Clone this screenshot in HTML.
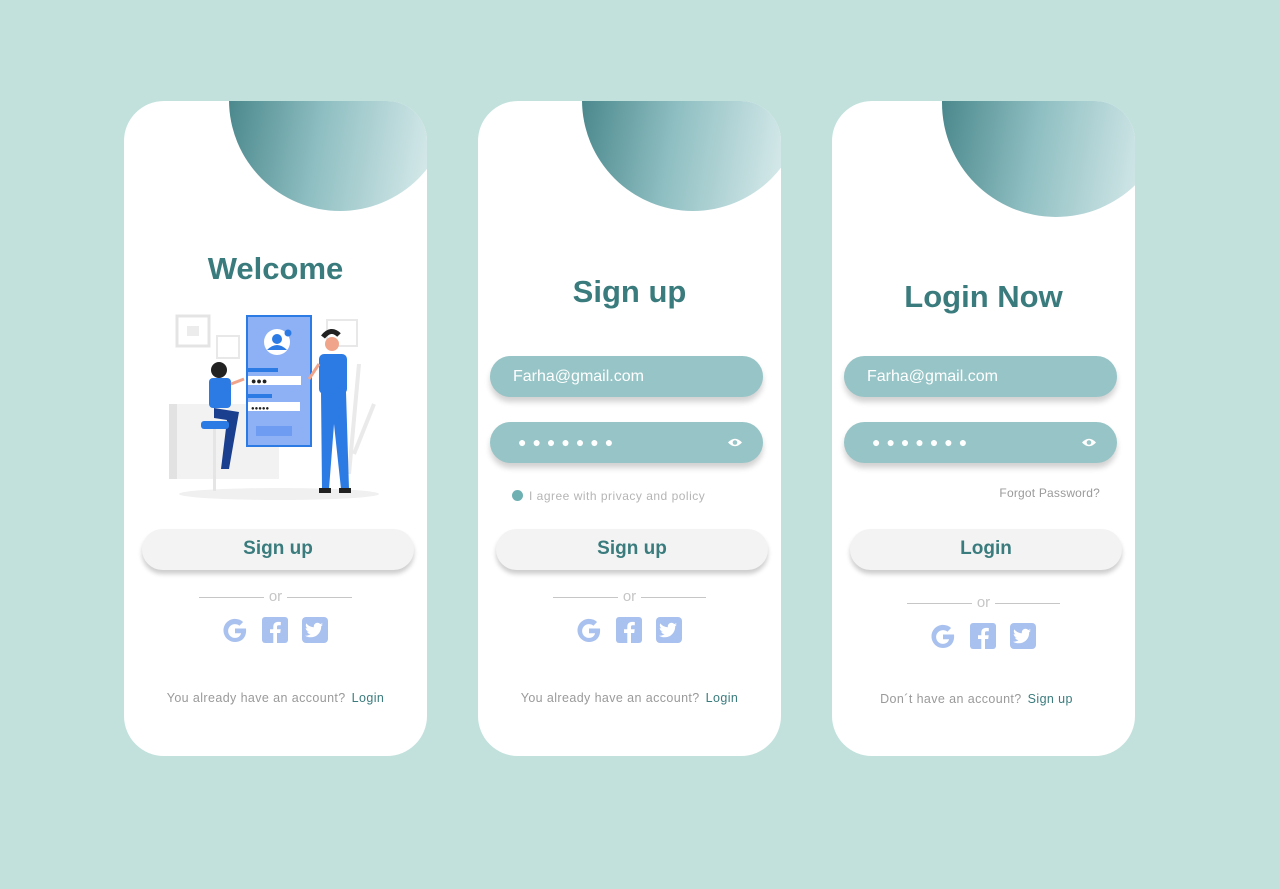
<!DOCTYPE html>
<html><head><meta charset="utf-8"><style>
*{margin:0;padding:0;box-sizing:border-box}
body{width:1280px;height:889px;background:#c2e1dc;font-family:"Liberation Sans",sans-serif;position:relative;overflow:hidden}
.card{position:absolute;top:101px;width:303px;height:655px;background:#fff;border-radius:40px;overflow:hidden}
.blob{position:absolute;border-radius:50%;background:linear-gradient(100deg,#3d7d82 0%,#8fbfc2 45%,#e6f3f3 100%)}
.title{position:absolute;left:0;width:100%;text-align:center;color:#3a7b7d;font-weight:bold;font-size:31px}
.inp{position:absolute;left:12px;width:273px;height:41px;border-radius:21px;background:#97c4c6;box-shadow:0 5px 6px rgba(0,0,0,.18);color:#fff;font-size:16px;line-height:41px;padding-left:23px}
.dots{letter-spacing:6px;font-size:14px;padding-left:28px}
.eye{position:absolute;right:20px;top:15px}
.btn{position:absolute;left:18px;width:272px;height:41px;border-radius:21px;background:#f3f3f3;box-shadow:0 4px 5px rgba(0,0,0,.2);color:#3a7b7d;font-weight:bold;font-size:19px;text-align:center;line-height:39px}
.or{position:absolute;left:0;width:100%;text-align:center;color:#c6c6c6;font-size:15px}
.or span{display:inline-block;width:65px;height:1px;background:#c6c6c6;vertical-align:middle;margin:0 5px}
.icons{position:absolute;left:0;width:100%;display:flex;justify-content:center}
.foot{position:absolute;left:0;width:100%;text-align:center;font-size:12.5px;letter-spacing:.4px;color:#9a9a9a}
.foot b{font-weight:normal;color:#3a7b7d;margin-left:6px}
.small{position:absolute;font-size:12px;letter-spacing:.5px;color:#b5b5b5}
</style></head><body>

<svg width="0" height="0" style="position:absolute">
<defs>
<g id="soc">
<path d="M25 12.5h-11v4.8h6.1c-.7 2.9-3 4.6-6.1 4.6-3.8 0-6.9-3.1-6.9-6.9s3.1-6.9 6.9-6.9c1.7 0 3.2.6 4.4 1.6l3.7-3.7C19.9 4 17.1 2.9 14 2.9 7.6 2.9 2.5 8 2.5 14.4S7.6 26 14 26c6.7 0 11.1-4.6 11.1-11.2 0-.8 0-1.6-.1-2.3z" fill="#a9c1ee"/>
<rect x="41" y="1" width="26" height="26" rx="3" fill="#a9c1ee"/>
<path d="M56 27v-10h3.2l.5-3.7H56v-2.3c0-1 .3-1.8 1.8-1.8h2V6c-.4 0-1.5-.1-2.8-.1-2.8 0-4.7 1.7-4.7 4.8v2.6H49V17h3.3v10z" fill="#fff"/>
<rect x="81" y="1" width="26" height="26" rx="4" fill="#a9c1ee"/>
<path d="M102 8.5c-.7.3-1.4.5-2.1.6.8-.5 1.3-1.2 1.6-2-.7.4-1.5.7-2.3.9-.7-.7-1.6-1.2-2.7-1.2-2 0-3.7 1.7-3.700 3.7 0 .3 0 .6.1.8-3.1-.2-5.8-1.6-7.6-3.9-.3.5-.5 1.2-.5 1.9 0 1.3.7 2.4 1.6 3.1-.6 0-1.2-.2-1.7-.5 0 1.8 1.3 3.3 3 3.600-.3.1-.6.1-1 .1-.2 0-.5 0-.7-.1.5 1.5 1.8 2.5 3.5 2.6-1.3 1-2.9 1.6-4.6 1.6h-.9c1.6 1 3.6 1.6 5.7 1.6 6.8 0 10.5-5.600 10.5-10.5v-.5c.7-.5 1.3-1.2 1.8-1.9z" fill="#fff"/>
</g>
</defs></svg>

<!-- Card 1 -->
<div class="card" style="left:124px">
  <div class="blob" style="left:105px;top:-112px;width:222px;height:222px"></div>
  <div class="title" style="top:150px">Welcome</div>
  <svg style="position:absolute;left:45px;top:203px" width="215" height="200" viewBox="0 0 215 200">
    <rect x="8" y="12" width="32" height="30" fill="none" stroke="#e4e4e4" stroke-width="3"/>
    <rect x="18" y="22" width="12" height="10" fill="#ececec"/>
    <rect x="48" y="32" width="22" height="22" fill="none" stroke="#e8e8e8" stroke-width="2"/>
    <rect x="158" y="16" width="30" height="26" fill="none" stroke="#e8e8e8" stroke-width="2"/>
    <rect x="0" y="100" width="110" height="75" fill="#f2f2f2"/>
    <rect x="0" y="100" width="8" height="75" fill="#e2e2e2"/>
    <path d="M180 170 L190 60 M185 150 L205 100 M175 140 L165 80" stroke="#eaeaea" stroke-width="4"/>
    <ellipse cx="110" cy="190" rx="100" ry="6" fill="#f0f0f0"/>
    <rect x="78" y="12" width="64" height="130" fill="#8eb1f5" stroke="#2c7be5" stroke-width="2"/>
    <circle cx="108" cy="38" r="13" fill="#fff"/>
    <circle cx="108" cy="35" r="5" fill="#2c7be5"/>
    <path d="M98 46 q10-10 20 0" fill="#2c7be5"/>
    <circle cx="119" cy="29" r="3.5" fill="#2c7be5"/>
    <rect x="79" y="64" width="30" height="4" fill="#2c7be5"/>
    <rect x="79" y="72" width="53" height="9" fill="#fff"/>
    <text x="82" y="80" font-size="9" fill="#222" font-family="Liberation Sans">●●●</text>
    <rect x="79" y="90" width="24" height="4" fill="#2c7be5"/>
    <rect x="79" y="98" width="52" height="9" fill="#fff"/>
    <text x="82" y="106" font-size="6" fill="#222" font-family="Liberation Sans">●●●●●</text>
    <rect x="87" y="122" width="36" height="10" fill="#6d9cf2"/>
    <circle cx="50" cy="66" r="8" fill="#222"/>
    <rect x="40" y="74" width="22" height="30" rx="4" fill="#2c7be5"/>
    <path d="M45 104 L70 108 L60 165 L52 165 L58 116 L45 114z" fill="#1a3f8f"/>
    <rect x="32" y="117" width="28" height="8" rx="3" fill="#2c7be5"/>
    <rect x="44" y="125" width="3" height="62" fill="#e5e5e5"/>
    <path d="M62 80 L75 75" stroke="#f0a58a" stroke-width="3"/>
    <circle cx="163" cy="40" r="7" fill="#f0a58a"/>
    <path d="M154 33 q8-10 16-2" stroke="#222" stroke-width="5" fill="none"/>
    <rect x="150" y="50" width="28" height="40" rx="5" fill="#2c7be5"/>
    <path d="M152 88 L177 88 L180 185 L172 185 L165 120 L160 185 L153 185z" fill="#2c7be5"/>
    <path d="M150 60 L140 75" stroke="#f0a58a" stroke-width="3"/>
    <rect x="150" y="184" width="12" height="5" fill="#222"/>
    <rect x="170" y="184" width="12" height="5" fill="#222"/>
  </svg>
  <div class="btn" style="top:428px">Sign up</div>
  <div class="or" style="top:487px"><span></span>or<span></span></div>
  <div class="icons" style="top:515px"><svg width="110" height="28"><use href="#soc"/></svg></div>
  <div class="foot" style="top:590px">You already have an account?<b>Login</b></div>
</div>

<!-- Card 2 -->
<div class="card" style="left:478px">
  <div class="blob" style="left:104px;top:-112px;width:222px;height:222px"></div>
  <div class="title" style="top:173px">Sign up</div>
  <div class="inp" style="top:255px">Farha@gmail.com</div>
  <div class="inp dots" style="top:321px">●●●●●●●<svg class="eye" width="16" height="11" viewBox="0 0 16 11"><path d="M1 5.5Q8-2 15 5.5Q8 13 1 5.5z" fill="#fff"/><circle cx="8" cy="5.5" r="2.3" fill="#97c4c6"/></svg></div>
  <div class="small" style="left:34px;top:388px"><span style="display:inline-block;width:11px;height:11px;border-radius:50%;background:#6fb0b3;vertical-align:-1px;margin-right:6px"></span>I agree with privacy and policy</div>
  <div class="btn" style="top:428px">Sign up</div>
  <div class="or" style="top:487px"><span></span>or<span></span></div>
  <div class="icons" style="top:515px"><svg width="110" height="28"><use href="#soc"/></svg></div>
  <div class="foot" style="top:590px">You already have an account?<b>Login</b></div>
</div>

<!-- Card 3 -->
<div class="card" style="left:832px">
  <div class="blob" style="left:110px;top:-112px;width:228px;height:228px"></div>
  <div class="title" style="top:178px">Login Now</div>
  <div class="inp" style="top:255px">Farha@gmail.com</div>
  <div class="inp dots" style="top:321px">●●●●●●●<svg class="eye" width="16" height="11" viewBox="0 0 16 11"><path d="M1 5.5Q8-2 15 5.5Q8 13 1 5.5z" fill="#fff"/><circle cx="8" cy="5.5" r="2.3" fill="#97c4c6"/></svg></div>
  <div class="small" style="right:35px;top:385px;color:#9a9a9a;letter-spacing:.2px">Forgot Password?</div>
  <div class="btn" style="top:428px">Login</div>
  <div class="or" style="top:493px"><span></span>or<span></span></div>
  <div class="icons" style="top:521px"><svg width="110" height="28"><use href="#soc"/></svg></div>
  <div class="foot" style="top:591px;padding-right:14px">Don´t have an account?<b>Sign up</b></div>
</div>
</body></html>
